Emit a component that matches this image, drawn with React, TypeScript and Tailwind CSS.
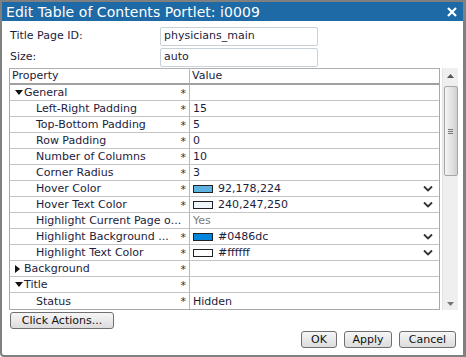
import React from "react";

type Row = {
  label: string;
  level: 0 | 1;
  expand?: "open" | "closed";
  star?: boolean;
  value?: string;
  swatch?: string;
  dropdown?: boolean;
  muted?: boolean;
};

const rows: Row[] = [
  { label: "General", level: 0, expand: "open", star: true },
  { label: "Left-Right Padding", level: 1, star: true, value: "15" },
  { label: "Top-Bottom Padding", level: 1, star: true, value: "5" },
  { label: "Row Padding", level: 1, star: true, value: "0" },
  { label: "Number of Columns", level: 1, star: true, value: "10" },
  { label: "Corner Radius", level: 1, star: true, value: "3" },
  { label: "Hover Color", level: 1, star: true, value: "92,178,224", swatch: "#5cb2e0", dropdown: true },
  { label: "Hover Text Color", level: 1, star: true, value: "240,247,250", swatch: "#f0f7fa", dropdown: true },
  { label: "Highlight Current Page o...", level: 1, value: "Yes", muted: true },
  { label: "Highlight Background ...", level: 1, star: true, value: "#0486dc", swatch: "#0486dc", dropdown: true },
  { label: "Highlight Text Color", level: 1, star: true, value: "#ffffff", swatch: "#ffffff", dropdown: true },
  { label: "Background", level: 0, expand: "closed", star: true },
  { label: "Title", level: 0, expand: "open", star: true },
  { label: "Status", level: 1, star: true, value: "Hidden" },
];

const Chevron = () => (
  <svg width="10" height="7" viewBox="0 0 10 7" className="shrink-0">
    <path d="M1 1.5 L5 5.5 L9 1.5" fill="none" stroke="#333" strokeWidth="1.8" />
  </svg>
);

const Arrow = ({ dir }: { dir: "open" | "closed" }) =>
  dir === "open" ? (
    <svg width="8" height="5" viewBox="0 0 8 5" className="shrink-0">
      <path d="M0 0 H8 L4 5 Z" fill="#111" />
    </svg>
  ) : (
    <svg width="5" height="8" viewBox="0 0 5 8" className="shrink-0">
      <path d="M0 0 V8 L5 4 Z" fill="#111" />
    </svg>
  );

const Btn = ({ children, className }: { children: React.ReactNode; className?: string }) => (
  <button
    className={`h-[17px] rounded-[3px] border border-[#707070] bg-gradient-to-b from-[#f6f6f6] to-[#dcdcdc] text-[11px] leading-none text-[#111] ${className ?? ""}`}
  >
    {children}
  </button>
);

export default function App() {
  return (
    <div
      className="w-[466px] h-[357px] border-2 border-r-[3px] border-[#808080] rounded-bl-[4px] bg-white flex flex-col text-[11px] text-[#1c1c3c] overflow-hidden"
      style={{ fontFamily: '"DejaVu Sans", Verdana, sans-serif' }}
    >
      {/* title bar */}
      <div className="h-[19px] bg-[#1e6aa6] flex items-center justify-between pl-[4px] pr-[6px] text-white">
        <span className="text-[14px] leading-none tracking-[0.05px]">Edit Table of Contents Portlet: i0009</span>
        <svg width="10" height="10" viewBox="0 0 10 10">
          <path d="M1 1 L9 9 M9 1 L1 9" stroke="#fff" strokeWidth="2.2" />
        </svg>
      </div>

      {/* fields */}
      <div className="flex flex-col gap-[2px] pt-[6px] pl-[8px]">
        <div className="flex items-center h-[19px]">
          <span className="w-[150px]">Title Page ID:</span>
          <div className="w-[158px] h-[19px] border border-[#c8d0d8] rounded-[2px] px-[3px] flex items-center">
            physicians_main
          </div>
        </div>
        <div className="flex items-center h-[19px]">
          <span className="w-[150px]">Size:</span>
          <div className="w-[158px] h-[19px] border border-[#c8d0d8] rounded-[2px] px-[3px] flex items-center">
            auto
          </div>
        </div>
      </div>

      {/* property grid */}
      <div className="flex ml-[7px] mt-[1px] gap-[2px]">
        <div className="w-[431px] border border-[#a8a8a8] border-t-[#b0b0b0]">
          <div className="flex h-[16px] border-b-2 border-[#a0a0a0] leading-[14px]">
            <div className="w-[180px] pl-[2px] border-r border-[#b8b8b8]">Property</div>
            <div className="flex-1 pl-[2px]">Value</div>
          </div>
          {rows.map((r, i) => (
            <div
              key={i}
              className={`flex h-[16px] leading-[15px] ${i < rows.length - 1 ? "border-b border-[#c4c4c4]" : ""}`}
            >
              <div className="w-[180px] border-r border-[#b8b8b8] flex items-center relative">
                {r.level === 0 ? (
                  <div className="flex items-center pl-[5px]">
                    <div className="w-[9px] flex items-center">{r.expand && <Arrow dir={r.expand} />}</div>
                    <span>{r.label}</span>
                  </div>
                ) : (
                  <span className="pl-[26px]">{r.label}</span>
                )}
                {r.star && <span className="absolute right-[3px] top-[1px] text-[11px] text-[#333]">*</span>}
              </div>
              <div className="flex-1 flex items-center pl-[3px] pr-[6px]">
                {r.swatch && (
                  <span
                    className="w-[20px] h-[8px] border border-[#222] mr-[5px] shrink-0"
                    style={{ backgroundColor: r.swatch }}
                  />
                )}
                <span className={`flex-1 ${r.muted ? "text-[#7a7a7a]" : ""}`}>{r.value}</span>
                {r.dropdown && <Chevron />}
              </div>
            </div>
          ))}
        </div>

        {/* scrollbar */}
        <div className="w-[16px] bg-[#efefef] border-l border-[#e2e2e2] flex flex-col items-center">
          <div className="h-[16px] flex items-center justify-center">
            <svg width="7" height="4" viewBox="0 0 7 4">
              <path d="M0 4 L3.5 0 L7 4 Z" fill="#555" />
            </svg>
          </div>
          <div className="w-[14px] h-[90px] mt-[2px] rounded-[2px] border border-[#a6a6a6] bg-gradient-to-r from-[#f4f4f4] via-[#e4e4e4] to-[#d0d0d0] flex flex-col items-center justify-center gap-[1px]">
            <div className="w-[5px] h-px bg-[#777]" />
            <div className="w-[5px] h-px bg-[#777]" />
            <div className="w-[5px] h-px bg-[#777]" />
          </div>
          <div className="flex-1" />
          <div className="h-[12px] flex items-center justify-center">
            <svg width="7" height="4" viewBox="0 0 7 4">
              <path d="M0 0 L7 0 L3.5 4 Z" fill="#777" />
            </svg>
          </div>
        </div>
      </div>

      {/* footer */}
      <div className="flex pl-[8px] pt-[2px]">
        <Btn className="w-[104px]">Click Actions...</Btn>
      </div>
      <div className="flex justify-end gap-[7px] pr-[7px] pt-[2px]">
        <Btn className="w-[36px]">OK</Btn>
        <Btn className="w-[48px]">Apply</Btn>
        <Btn className="w-[57px]">Cancel</Btn>
      </div>
    </div>
  );
}
